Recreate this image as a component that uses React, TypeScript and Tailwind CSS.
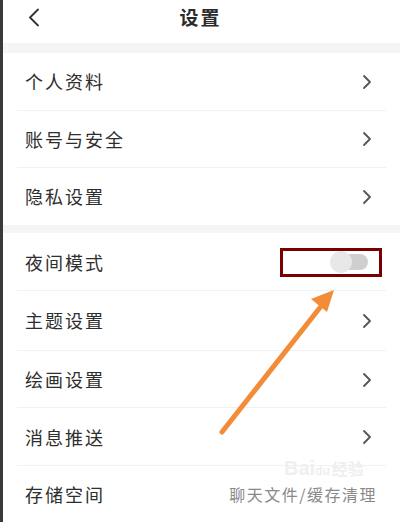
import React from "react";

const font = { fontFamily: '"Noto Sans CJK SC", "Noto Sans", sans-serif' };

function Chevron() {
  return (
    <svg width="10" height="16" viewBox="0 0 10 16" className="shrink-0">
      <path d="M2 2 L8 8 L2 14" fill="none" stroke="#555" strokeWidth="1.8" strokeLinecap="round" strokeLinejoin="round" />
    </svg>
  );
}

function Row({ label, h = "h-[58px]", border = true, right }: { label: string; h?: string; border?: boolean; right?: React.ReactNode }) {
  return (
    <div className={`relative flex items-center justify-between pl-[22px] pr-[28px] ${h} bg-white`}>
      <span className="text-[18px] tracking-[2px] text-[#2e2e2e]">{label}</span>
      {right ?? <Chevron />}
      {border && <div className="absolute bottom-0 left-[14px] right-[14px] h-px bg-[#f1f1f1]" />}
    </div>
  );
}

export default function App() {
  return (
    <div className="relative w-[400px] h-[522px] overflow-hidden bg-white flex" style={font}>
      <div className="w-[3px] bg-[#3a3a3a] shrink-0" />
      <div className="flex-1 flex flex-col">
        <div className="relative h-[43px] flex items-center justify-center bg-white">
          <svg width="12" height="20" viewBox="0 0 12 20" className="absolute left-[25px] top-[8px]">
            <path d="M10 1.5 L2 9.5 L10 17.5" fill="none" stroke="#333" strokeWidth="1.8" strokeLinecap="round" strokeLinejoin="round" />
          </svg>
          <span className="text-[19px] font-bold tracking-[2px] text-[#2a2a2a] -mt-[8px] -ml-[2px]">设置</span>
        </div>
        <div className="h-[10px] bg-[#f5f5f5]" />
        <Row label="个人资料" />
        <Row label="账号与安全" />
        <Row label="隐私设置" h="h-[57px]" border={false} />
        <div className="h-[8px] bg-[#f5f5f5]" />
        <Row
          label="夜间模式"
          right={
            <div className="-mr-[10px] w-[102px] h-[29px] border-[3px] border-[#7a0000] flex items-center justify-end pr-[11px]">
              <div className="relative w-[36px] h-[16px] rounded-full bg-[#cfcfcf]">
                <div className="absolute -left-[2px] -top-[3px] w-[22px] h-[22px] rounded-full bg-[#e8e8e8]" />
              </div>
            </div>
          }
        />
        <Row label="主题设置" h="h-[60px]" />
        <Row label="绘画设置" />
        <Row label="消息推送" />
        <Row
          label="存储空间"
          h="h-[56px]"
          border={false}
          right={<span className="text-[16px] tracking-[1.5px] text-[#8a8a8a] -mr-[5px]">聊天文件/缓存清理</span>}
        />
      </div>
      <div className="absolute left-[284px] top-[458px] text-[20px] font-bold text-[#efefef] pointer-events-none leading-none" style={{ fontFamily: '"Liberation Sans", sans-serif' }}>
        Bai<span className="text-[12px]">du</span><span className="text-[16px] ml-[2px]" style={font}>经验</span>
      </div>
      <svg className="absolute left-0 top-0 pointer-events-none" width="400" height="522" viewBox="0 0 400 522">
        <line x1="222" y1="432" x2="322" y2="305" stroke="#f28c38" strokeWidth="5" strokeLinecap="round" />
        <polygon points="334,290 311,299 327,312" fill="#f28c38" />
      </svg>
    </div>
  );
}
